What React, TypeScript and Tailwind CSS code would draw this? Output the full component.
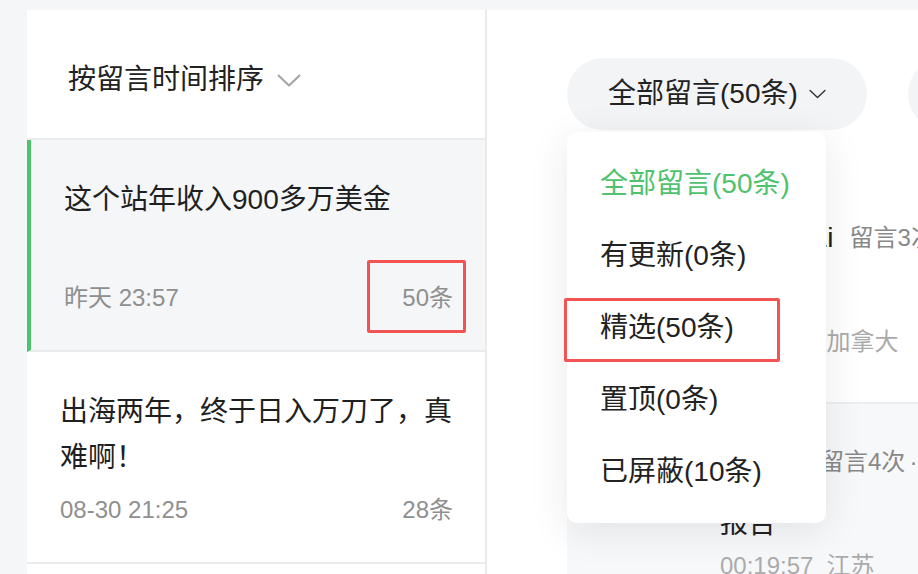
import React from "react"

const topics = [
  { title: "这个站年收入900多万美金", time: "昨天 23:57", count: "50条", active: true },
  { title: "出海两年，终于日入万刀了，真难啊！", time: "08-30 21:25", count: "28条", active: false },
  { title: "独立开发者的第一年", time: "08-28 10:12", count: "16条", active: false },
]

const filters = [
  { label: "全部留言(50条)", selected: true },
  { label: "有更新(0条)", selected: false },
  { label: "精选(50条)", selected: false },
  { label: "置顶(0条)", selected: false },
  { label: "已屏蔽(10条)", selected: false },
]

const comments = [
  { name: "张大卫 Li", times: "留言3次", extra: "", body: "学习了", time: "23:41:08", place: "加拿大", bg: "bg-white" },
  { name: "李明明", times: "留言4次", extra: "· 已精选", body: "报告", time: "00:19:57", place: "江苏", bg: "bg-[#f7f8fa]" },
]

function Chevron({ className, stroke }: { className: string; stroke: string }) {
  return (
    <svg className={className} viewBox="0 0 24 13" fill="none">
      <polyline points="1.5,1.5 12,11.5 22.5,1.5" stroke={stroke} strokeWidth={2} strokeLinecap="round" strokeLinejoin="round" />
    </svg>
  )
}

export default function App() {
  return (
    <div className="relative w-[918px] h-[574px] overflow-hidden bg-[#f5f6f8] flex pt-[10px] pl-[27px] font-['Liberation_Sans','Noto_Sans_CJK_SC',sans-serif]">
      {/* Left: topic list */}
      <div className="w-[460px] shrink-0 bg-white border-r-2 border-[#ebebeb] flex flex-col">
        <div className="h-[130px] shrink-0 border-b-2 border-[#ebebeb] pl-[41px] pt-[50px] flex items-start">
          <span className="text-[28px] leading-[40px] text-[#222]">按留言时间排序</span>
          <Chevron className="w-[24px] h-[13px] ml-[13px] mt-[14px]" stroke="#a3a3a3" />
        </div>
        {topics.map((t) => (
          <div
            key={t.title}
            className={`h-[212px] shrink-0 border-b-2 border-[#ebebeb] pl-[33px] pr-[32px] pt-[37px] pb-[36px] flex flex-col justify-between ${
              t.active ? "bg-[#f5f6f8] border-l-4 border-l-[#4fc26d]" : "bg-white"
            }`}
          >
            <div className="text-[28px] leading-[46px] text-[#1f1f1f]">{t.title}</div>
            <div className="flex justify-between text-[24px] leading-[32px] text-[#8f8f8f]">
              <span>{t.time}</span>
              <span>{t.count}</span>
            </div>
          </div>
        ))}
      </div>

      {/* Right: comments */}
      <div className="relative flex-1 bg-white pl-[80px] flex flex-col">
        <div className="pt-[48px] flex gap-[41px] whitespace-nowrap">
          <div className="h-[72px] shrink-0 px-[41px] rounded-full bg-[#f3f4f6] flex items-center">
            <span className="text-[28px] text-[#222]">全部留言(50条)</span>
            <Chevron className="w-[17px] h-[10px] ml-[11px]" stroke="#333" />
          </div>
          <div className="h-[72px] shrink-0 px-[41px] rounded-full bg-[#f3f4f6] flex items-center">
            <span className="text-[28px] text-[#222]">按时间排序</span>
          </div>
        </div>

        <div className="mt-[50px] flex flex-col">
          {comments.map((c) => (
            <div key={c.name} className={`${c.bg} border-b-2 border-[#eeeeee] pt-[40px] pb-[44px] pl-[33px] flex`}>
              <div className="w-[64px] h-[64px] rounded-full bg-[#e5e7eb] shrink-0" />
              <div className="ml-[56px] flex flex-col whitespace-nowrap">
                <div className="flex items-center h-[36px]">
                  <span className="text-[28px] text-[#222]">{c.name}</span>
                  <span className="ml-[16px] text-[24px] text-[#888]">{c.times}</span>
                  {c.extra && <span className="ml-[4px] text-[24px] text-[#888]">{c.extra}</span>}
                </div>
                <div className="mt-[21px] text-[28px] leading-[46px] text-[#222]">{c.body}</div>
                <div className="mt-[3px] flex gap-[13px] text-[24px] leading-[32px] text-[#ababab]">
                  <span>{c.time}</span>
                  <span>{c.place}</span>
                </div>
              </div>
            </div>
          ))}
        </div>

        {/* Filter dropdown */}
        <div className="absolute left-[80px] top-[122px] w-[259px] h-[391px] bg-white rounded-[10px] shadow-[0_8px_40px_rgba(0,0,0,0.09)] pt-[16px] pl-[33px]">
          {filters.map((f) => (
            <div
              key={f.label}
              className={`text-[28px] leading-[72px] ${f.selected ? "text-[#4fc26d]" : "text-[#222]"}`}
            >
              {f.label}
            </div>
          ))}
        </div>
      </div>

      {/* Annotation boxes */}
      <div className="absolute left-[367px] top-[260px] w-[99px] h-[73px] border-[3px] border-[#f25454] rounded-[2px]" />
      <div className="absolute left-[564px] top-[298px] w-[216px] h-[64px] border-[3px] border-[#f25454] rounded-[2px]" />
    </div>
  )
}
